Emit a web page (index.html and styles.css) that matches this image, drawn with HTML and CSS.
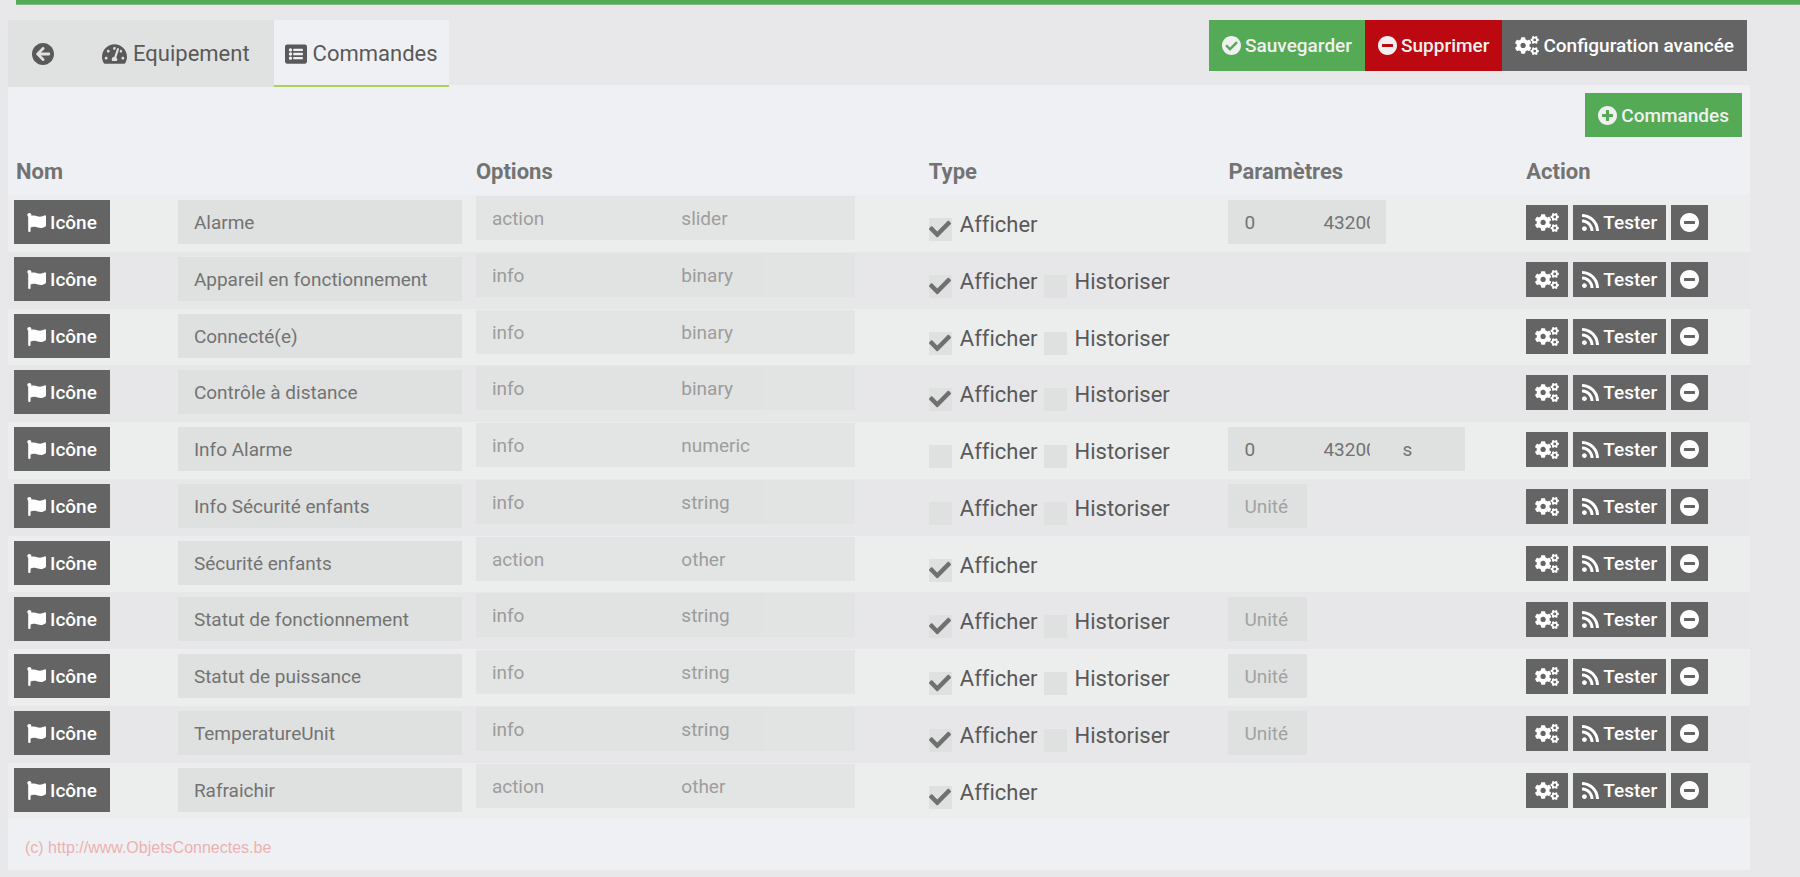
FILE: index.html
```html
<!DOCTYPE html>
<html lang="fr">
<head>
<meta charset="utf-8">
<title>Commandes</title>
<link rel="stylesheet" href="styles.css">
</head>
<body>
<svg class="sprite" aria-hidden="true">
  <symbol id="back" viewBox="8 8 496 496"><path d="M256 504C119 504 8 393 8 256S119 8 256 8s248 111 248 248-111 248-248 248zm28.9-143.6L209.4 288H392c13.3 0 24-10.7 24-24v-16c0-13.3-10.7-24-24-24H209.4l75.5-72.4c9.7-9.3 9.9-24.8.4-34.3l-11-10.9c-9.4-9.4-24.6-9.4-33.9 0L107.7 239c-9.4 9.4-9.4 24.6 0 33.9l132.7 132.7c9.4 9.4 24.6 9.4 33.9 0l11-10.9c9.5-9.5 9.3-25-.4-34.3z"/></symbol>
  <symbol id="gauge" viewBox="0 32 576 448"><path d="M288 32C128.94 32 0 160.94 0 320c0 52.8 14.25 102.26 39.06 144.8 5.61 9.62 16.3 15.2 27.44 15.2h443c11.14 0 21.83-5.58 27.44-15.2C561.75 422.26 576 372.8 576 320c0-159.06-128.94-288-288-288zm0 64c14.71 0 26.58 10.13 30.32 23.65-1.11 2.26-2.64 4.23-3.45 6.67l-9.22 27.67c-5.13 3.49-10.97 6.01-17.64 6.01-17.67 0-32-14.33-32-32S270.33 96 288 96zM96 384c-17.67 0-32-14.33-32-32s14.33-32 32-32 32 14.33 32 32-14.33 32-32 32zm48-160c-17.67 0-32-14.33-32-32s14.33-32 32-32 32 14.33 32 32-14.33 32-32 32zm246.77-72.41l-61.33 184C343.13 347.33 352 364.54 352 384c0 11.72-3.38 22.55-8.88 32H232.88c-5.5-9.45-8.88-20.28-8.88-32 0-33.94 26.5-61.43 59.9-63.59l61.34-184.01c4.17-12.56 17.73-19.45 30.36-15.17 12.57 4.19 19.35 17.79 15.17 30.36zm14.66 57.2l15.52-46.55c3.47-1.29 7.13-2.23 11.05-2.23 17.67 0 32 14.33 32 32s-14.33 32-32 32c-11.38-.01-20.89-6.28-26.57-15.22zM480 384c-17.67 0-32-14.33-32-32s14.33-32 32-32 32 14.33 32 32-14.33 32-32 32z"/></symbol>
  <symbol id="list" viewBox="0 32 512 448"><path fill-rule="evenodd" d="M464 480H48c-26.5 0-48-21.500-48-48V80c0-26.500 21.500-48 48-48h416c26.500 0 48 21.500 48 48v352c0 26.500-21.500 48-48 48zM128 120a40 40 0 1 0 0 80 40 40 0 0 0 0-80zm0 96a40 40 0 1 0 0 80 40 40 0 0 0 0-80zm0 96a40 40 0 1 0 0 80 40 40 0 0 0 0-80zM204 132h200a12 12 0 0 1 12 12v32a12 12 0 0 1-12 12H204a12 12 0 0 1-12-12v-32a12 12 0 0 1 12-12zm0 96h200a12 12 0 0 1 12 12v32a12 12 0 0 1-12 12H204a12 12 0 0 1-12-12v-32a12 12 0 0 1 12-12zm0 96h200a12 12 0 0 1 12 12v32a12 12 0 0 1-12 12H204a12 12 0 0 1-12-12v-32a12 12 0 0 1 12-12z"/></symbol>
  <symbol id="ok" viewBox="8 8 496 496"><path d="M504 256c0 136.967-111.033 248-248 248S8 392.967 8 256 119.033 8 256 8s248 111.033 248 248zM227.314 387.314l184-184c6.248-6.248 6.248-16.379 0-22.627l-22.627-22.627c-6.248-6.249-16.379-6.249-22.628 0L216 308.118l-70.059-70.059c-6.248-6.248-16.379-6.248-22.628 0l-22.627 22.627c-6.248 6.248-6.248 16.379 0 22.627l104 104c6.249 6.249 16.379 6.249 22.628.001z"/></symbol>
  <symbol id="minus" viewBox="8 8 496 496"><path d="M256 8C119 8 8 119 8 256s111 248 248 248 248-111 248-248S393 8 256 8zM124 296c-6.600 0-12-5.400-12-12v-56c0-6.600 5.400-12 12-12h264c6.600 0 12 5.400 12 12v56c0 6.600-5.400 12-12 12H124z"/></symbol>
  <symbol id="plus" viewBox="8 8 496 496"><path d="M256 8C119 8 8 119 8 256s111 248 248 248 248-111 248-248S393 8 256 8zm144 276c0 6.600-5.400 12-12 12h-92v92c0 6.600-5.400 12-12 12h-56c-6.600 0-12-5.400-12-12v-92h-92c-6.600 0-12-5.400-12-12v-56c0-6.600 5.400-12 12-12h92v-92c0-6.600 5.400-12 12-12h56c6.600 0 12 5.400 12 12v92h92c6.600 0 12 5.400 12 12v56z"/></symbol>
  <symbol id="flag" viewBox="0 0 512 512"><path d="M349.565 98.783C295.978 98.783 251.721 64 184.348 64c-24.955 0-47.309 4.384-68.045 12.013a55.947 55.947 0 0 0 3.586-23.562C118.117 24.015 94.806 1.206 66.338.048 34.345-1.254 8 24.296 8 56c0 19.026 9.497 35.825 24 45.945V488c0 13.255 10.745 24 24 24h16c13.255 0 24-10.745 24-24v-94.400c28.311-12.064 63.582-22.122 114.435-22.122 53.588 0 97.844 34.783 165.217 34.783 48.169 0 86.667-16.294 122.505-40.858C506.840 359.452 512 349.571 512 339.045v-243.100c0-23.393-24.269-38.870-45.485-29.016-34.338 15.948-76.454 31.854-116.950 31.854z"/></symbol>
  <symbol id="rss" viewBox="0 32 448 448"><path d="M128.081 415.959c0 35.369-28.672 64.041-64.041 64.041S0 451.328 0 415.959s28.672-64.041 64.041-64.041 64.040 28.673 64.040 64.041zm175.660 47.250c-8.354-154.600-132.185-278.587-286.950-286.950C7.656 175.765 0 183.105 0 192.253v48.069c0 8.415 6.490 15.472 14.887 16.018 111.832 7.284 201.473 96.702 208.772 208.772.547 8.397 7.604 14.887 16.018 14.887h48.069c9.149.001 16.489-7.655 15.995-16.790zm144.249.288C439.596 229.677 251.465 40.445 16.503 32.010 7.473 31.686 0 38.981 0 48.016v48.068c0 8.625 6.835 15.645 15.453 15.999 191.179 7.839 344.627 161.316 352.465 352.465.353 8.618 7.373 15.453 15.999 15.453h48.068c9.034-.001 16.329-7.474 16.005-16.504z"/></symbol>
  <symbol id="cogs" viewBox="0 0 640 512">
    <path id="small-cog" d="M512.100 191l-8.200 14.300c-3 5.300-9.400 7.500-15.100 5.400-11.800-4.400-22.600-10.700-32.100-18.600-4.600-3.800-5.800-10.500-2.800-15.700l8.200-14.300c-6.900-8-12.300-17.300-15.900-27.400h-16.500c-6 0-11.200-4.300-12.200-10.300-2-12-2.100-24.600 0-37.100 1-6 6.200-10.400 12.200-10.400h16.500c3.600-10.100 9-19.400 15.900-27.400l-8.200-14.300c-3-5.200-1.900-11.900 2.800-15.700 9.500-7.900 20.400-14.200 32.100-18.600 5.700-2.100 12.100.1 15.100 5.400l8.200 14.300c10.500-1.900 21.200-1.900 31.700 0L552 6.300c3-5.300 9.400-7.500 15.100-5.400 11.800 4.400 22.600 10.700 32.100 18.600 4.600 3.800 5.800 10.500 2.800 15.700l-8.200 14.300c6.900 8 12.300 17.300 15.900 27.400h16.500c6 0 11.200 4.300 12.200 10.300 2 12 2.100 24.600 0 37.100-1 6-6.200 10.400-12.200 10.400h-16.500c-3.600 10.100-9 19.400-15.900 27.400l8.200 14.300c3 5.200 1.900 11.900-2.800 15.700-9.500 7.900-20.400 14.200-32.100 18.600-5.700 2.100-12.100-.1-15.100-5.400l-8.200-14.300c-10.400 1.900-21.200 1.900-31.700 0zm-10.500-58.800c38.500 29.600 82.400-14.300 52.800-52.800-38.500-29.700-82.400 14.300-52.800 52.800z"/>
    <use href="#small-cog" y="301"/>
    <path d="M386.300 286.100l33.700 16.800c10.100 5.800 14.500 18.100 10.500 29.100-8.900 24.200-26.400 46.400-42.600 65.800-7.400 8.900-20.200 11.100-30.300 5.300l-29.100-16.800c-16 13.700-34.600 24.600-54.900 31.700v33.600c0 11.600-8.300 21.600-19.700 23.600-24.600 4.200-50.400 4.400-75.900 0-11.500-2-20-11.900-20-23.600V418c-20.300-7.200-38.900-18-54.900-31.700L74 403c-10 5.800-22.900 3.600-30.300-5.300-16.200-19.400-33.300-41.600-42.200-65.700-4-10.900.4-23.200 10.500-29.100l33.300-16.800c-3.900-20.900-3.900-42.400 0-63.400L12 205.800c-10.100-5.800-14.600-18.100-10.500-29 8.900-24.200 26-46.400 42.200-65.800 7.400-8.900 20.200-11.100 30.300-5.300l29.100 16.800c16-13.700 34.600-24.600 54.900-31.700V57.100c0-11.500 8.200-21.500 19.600-23.500 24.600-4.200 50.500-4.400 76-.1 11.500 2 20 11.900 20 23.600v33.600c20.300 7.200 38.900 18 54.900 31.700l29.100-16.800c10-5.800 22.900-3.600 30.300 5.300 16.200 19.400 33.200 41.600 42.100 65.800 4 10.900.1 23.200-10 29.100l-33.700 16.800c3.900 21 3.900 42.500 0 63.500zm-117.600 21.100c59.200-77-28.700-164.900-105.700-105.700-59.200 77 28.700 164.900 105.700 105.700z"/>
  </symbol>
</svg>

<div class="topbar"></div>

<main class="page">
  <header class="toolbar">
    <nav class="tabs">
      <a class="tab" href="#retour" aria-label="Retour"><svg class="icon tab-icon"><use href="#back"/></svg></a>
      <a class="tab" href="#equipement"><svg class="icon tab-icon-wide"><use href="#gauge"/></svg>Equipement</a>
      <a class="tab active" href="#commandes"><svg class="icon tab-icon"><use href="#list"/></svg>Commandes</a>
    </nav>
    <div class="toolbar-actions">
      <button class="btn large success" type="button"><svg class="icon"><use href="#ok"/></svg>Sauvegarder</button>
      <button class="btn large danger" type="button"><svg class="icon"><use href="#minus"/></svg>Supprimer</button>
      <button class="btn large" type="button"><svg class="icon cogs"><use href="#cogs"/></svg>Configuration avancée</button>
    </div>
  </header>

  <section class="panel" id="commandes">
    <div class="panel-actions">
      <button class="btn success" type="button"><svg class="icon"><use href="#plus"/></svg>Commandes</button>
    </div>

    <table class="commands">
      <colgroup><col class="col-name"><col class="col-options"><col class="col-type"><col class="col-params"><col></colgroup>
      <thead>
        <tr><th>Nom</th><th>Options</th><th>Type</th><th>Paramètres</th><th>Action</th></tr>
      </thead>
      <tbody>
        <tr>
          <td class="name"><div class="name-row"><button class="btn" type="button"><svg class="icon"><use href="#flag"/></svg>Icône</button><input class="field" aria-label="Nom" value="Alarme"></div></td>
          <td class="options"><div class="pair"><select class="field" aria-label="Type" disabled><option>action</option></select><select class="field" aria-label="Sous-type" disabled><option>slider</option></select></div></td>
          <td class="type"><div class="checks"><label class="check"><input type="checkbox" checked>Afficher</label></div></td>
          <td class="params"><div class="group"><input class="field" aria-label="Min" value="0"><input class="field" aria-label="Max" value="43200"></div></td>
          <td class="action"><div class="buttons"><button class="btn small" type="button" aria-label="Configurer"><svg class="icon cogs"><use href="#cogs"/></svg></button><button class="btn small" type="button"><svg class="icon rss"><use href="#rss"/></svg>Tester</button><button class="btn small" type="button" aria-label="Supprimer"><svg class="icon"><use href="#minus"/></svg></button></div></td>
        </tr>
        <tr>
          <td class="name"><div class="name-row"><button class="btn" type="button"><svg class="icon"><use href="#flag"/></svg>Icône</button><input class="field" aria-label="Nom" value="Appareil en fonctionnement"></div></td>
          <td class="options"><div class="pair"><select class="field" aria-label="Type" disabled><option>info</option></select><select class="field" aria-label="Sous-type" disabled><option>binary</option></select></div></td>
          <td class="type"><div class="checks"><label class="check"><input type="checkbox" checked>Afficher</label><label class="check"><input type="checkbox">Historiser</label></div></td>
          <td class="params"></td>
          <td class="action"><div class="buttons"><button class="btn small" type="button" aria-label="Configurer"><svg class="icon cogs"><use href="#cogs"/></svg></button><button class="btn small" type="button"><svg class="icon rss"><use href="#rss"/></svg>Tester</button><button class="btn small" type="button" aria-label="Supprimer"><svg class="icon"><use href="#minus"/></svg></button></div></td>
        </tr>
        <tr>
          <td class="name"><div class="name-row"><button class="btn" type="button"><svg class="icon"><use href="#flag"/></svg>Icône</button><input class="field" aria-label="Nom" value="Connecté(e)"></div></td>
          <td class="options"><div class="pair"><select class="field" aria-label="Type" disabled><option>info</option></select><select class="field" aria-label="Sous-type" disabled><option>binary</option></select></div></td>
          <td class="type"><div class="checks"><label class="check"><input type="checkbox" checked>Afficher</label><label class="check"><input type="checkbox">Historiser</label></div></td>
          <td class="params"></td>
          <td class="action"><div class="buttons"><button class="btn small" type="button" aria-label="Configurer"><svg class="icon cogs"><use href="#cogs"/></svg></button><button class="btn small" type="button"><svg class="icon rss"><use href="#rss"/></svg>Tester</button><button class="btn small" type="button" aria-label="Supprimer"><svg class="icon"><use href="#minus"/></svg></button></div></td>
        </tr>
        <tr>
          <td class="name"><div class="name-row"><button class="btn" type="button"><svg class="icon"><use href="#flag"/></svg>Icône</button><input class="field" aria-label="Nom" value="Contrôle à distance"></div></td>
          <td class="options"><div class="pair"><select class="field" aria-label="Type" disabled><option>info</option></select><select class="field" aria-label="Sous-type" disabled><option>binary</option></select></div></td>
          <td class="type"><div class="checks"><label class="check"><input type="checkbox" checked>Afficher</label><label class="check"><input type="checkbox">Historiser</label></div></td>
          <td class="params"></td>
          <td class="action"><div class="buttons"><button class="btn small" type="button" aria-label="Configurer"><svg class="icon cogs"><use href="#cogs"/></svg></button><button class="btn small" type="button"><svg class="icon rss"><use href="#rss"/></svg>Tester</button><button class="btn small" type="button" aria-label="Supprimer"><svg class="icon"><use href="#minus"/></svg></button></div></td>
        </tr>
        <tr>
          <td class="name"><div class="name-row"><button class="btn" type="button"><svg class="icon"><use href="#flag"/></svg>Icône</button><input class="field" aria-label="Nom" value="Info Alarme"></div></td>
          <td class="options"><div class="pair"><select class="field" aria-label="Type" disabled><option>info</option></select><select class="field" aria-label="Sous-type" disabled><option>numeric</option></select></div></td>
          <td class="type"><div class="checks"><label class="check"><input type="checkbox">Afficher</label><label class="check"><input type="checkbox">Historiser</label></div></td>
          <td class="params"><div class="group"><input class="field" aria-label="Min" value="0"><input class="field" aria-label="Max" value="43200"><input class="field" aria-label="Unité" value="s"></div></td>
          <td class="action"><div class="buttons"><button class="btn small" type="button" aria-label="Configurer"><svg class="icon cogs"><use href="#cogs"/></svg></button><button class="btn small" type="button"><svg class="icon rss"><use href="#rss"/></svg>Tester</button><button class="btn small" type="button" aria-label="Supprimer"><svg class="icon"><use href="#minus"/></svg></button></div></td>
        </tr>
        <tr>
          <td class="name"><div class="name-row"><button class="btn" type="button"><svg class="icon"><use href="#flag"/></svg>Icône</button><input class="field" aria-label="Nom" value="Info Sécurité enfants"></div></td>
          <td class="options"><div class="pair"><select class="field" aria-label="Type" disabled><option>info</option></select><select class="field" aria-label="Sous-type" disabled><option>string</option></select></div></td>
          <td class="type"><div class="checks"><label class="check"><input type="checkbox">Afficher</label><label class="check"><input type="checkbox">Historiser</label></div></td>
          <td class="params"><div class="group"><input class="field" aria-label="Unité" placeholder="Unité"></div></td>
          <td class="action"><div class="buttons"><button class="btn small" type="button" aria-label="Configurer"><svg class="icon cogs"><use href="#cogs"/></svg></button><button class="btn small" type="button"><svg class="icon rss"><use href="#rss"/></svg>Tester</button><button class="btn small" type="button" aria-label="Supprimer"><svg class="icon"><use href="#minus"/></svg></button></div></td>
        </tr>
        <tr>
          <td class="name"><div class="name-row"><button class="btn" type="button"><svg class="icon"><use href="#flag"/></svg>Icône</button><input class="field" aria-label="Nom" value="Sécurité enfants"></div></td>
          <td class="options"><div class="pair"><select class="field" aria-label="Type" disabled><option>action</option></select><select class="field" aria-label="Sous-type" disabled><option>other</option></select></div></td>
          <td class="type"><div class="checks"><label class="check"><input type="checkbox" checked>Afficher</label></div></td>
          <td class="params"></td>
          <td class="action"><div class="buttons"><button class="btn small" type="button" aria-label="Configurer"><svg class="icon cogs"><use href="#cogs"/></svg></button><button class="btn small" type="button"><svg class="icon rss"><use href="#rss"/></svg>Tester</button><button class="btn small" type="button" aria-label="Supprimer"><svg class="icon"><use href="#minus"/></svg></button></div></td>
        </tr>
        <tr>
          <td class="name"><div class="name-row"><button class="btn" type="button"><svg class="icon"><use href="#flag"/></svg>Icône</button><input class="field" aria-label="Nom" value="Statut de fonctionnement"></div></td>
          <td class="options"><div class="pair"><select class="field" aria-label="Type" disabled><option>info</option></select><select class="field" aria-label="Sous-type" disabled><option>string</option></select></div></td>
          <td class="type"><div class="checks"><label class="check"><input type="checkbox" checked>Afficher</label><label class="check"><input type="checkbox">Historiser</label></div></td>
          <td class="params"><div class="group"><input class="field" aria-label="Unité" placeholder="Unité"></div></td>
          <td class="action"><div class="buttons"><button class="btn small" type="button" aria-label="Configurer"><svg class="icon cogs"><use href="#cogs"/></svg></button><button class="btn small" type="button"><svg class="icon rss"><use href="#rss"/></svg>Tester</button><button class="btn small" type="button" aria-label="Supprimer"><svg class="icon"><use href="#minus"/></svg></button></div></td>
        </tr>
        <tr>
          <td class="name"><div class="name-row"><button class="btn" type="button"><svg class="icon"><use href="#flag"/></svg>Icône</button><input class="field" aria-label="Nom" value="Statut de puissance"></div></td>
          <td class="options"><div class="pair"><select class="field" aria-label="Type" disabled><option>info</option></select><select class="field" aria-label="Sous-type" disabled><option>string</option></select></div></td>
          <td class="type"><div class="checks"><label class="check"><input type="checkbox" checked>Afficher</label><label class="check"><input type="checkbox">Historiser</label></div></td>
          <td class="params"><div class="group"><input class="field" aria-label="Unité" placeholder="Unité"></div></td>
          <td class="action"><div class="buttons"><button class="btn small" type="button" aria-label="Configurer"><svg class="icon cogs"><use href="#cogs"/></svg></button><button class="btn small" type="button"><svg class="icon rss"><use href="#rss"/></svg>Tester</button><button class="btn small" type="button" aria-label="Supprimer"><svg class="icon"><use href="#minus"/></svg></button></div></td>
        </tr>
        <tr>
          <td class="name"><div class="name-row"><button class="btn" type="button"><svg class="icon"><use href="#flag"/></svg>Icône</button><input class="field" aria-label="Nom" value="TemperatureUnit"></div></td>
          <td class="options"><div class="pair"><select class="field" aria-label="Type" disabled><option>info</option></select><select class="field" aria-label="Sous-type" disabled><option>string</option></select></div></td>
          <td class="type"><div class="checks"><label class="check"><input type="checkbox" checked>Afficher</label><label class="check"><input type="checkbox">Historiser</label></div></td>
          <td class="params"><div class="group"><input class="field" aria-label="Unité" placeholder="Unité"></div></td>
          <td class="action"><div class="buttons"><button class="btn small" type="button" aria-label="Configurer"><svg class="icon cogs"><use href="#cogs"/></svg></button><button class="btn small" type="button"><svg class="icon rss"><use href="#rss"/></svg>Tester</button><button class="btn small" type="button" aria-label="Supprimer"><svg class="icon"><use href="#minus"/></svg></button></div></td>
        </tr>
        <tr>
          <td class="name"><div class="name-row"><button class="btn" type="button"><svg class="icon"><use href="#flag"/></svg>Icône</button><input class="field" aria-label="Nom" value="Rafraichir"></div></td>
          <td class="options"><div class="pair"><select class="field" aria-label="Type" disabled><option>action</option></select><select class="field" aria-label="Sous-type" disabled><option>other</option></select></div></td>
          <td class="type"><div class="checks"><label class="check"><input type="checkbox" checked>Afficher</label></div></td>
          <td class="params"></td>
          <td class="action"><div class="buttons"><button class="btn small" type="button" aria-label="Configurer"><svg class="icon cogs"><use href="#cogs"/></svg></button><button class="btn small" type="button"><svg class="icon rss"><use href="#rss"/></svg>Tester</button><button class="btn small" type="button" aria-label="Supprimer"><svg class="icon"><use href="#minus"/></svg></button></div></td>
        </tr>
      </tbody>
    </table>

    <footer class="credit">(c) http://www.ObjetsConnectes.be</footer>
  </section>
</main>
</body>
</html>
```
FILE: styles.css
```css
* { box-sizing: border-box; }

body {
  margin: 0;
  background: #e8e8ea;
  color: #595959;
  font-family: Roboto, "Liberation Sans", sans-serif;
  font-size: 22px;
  font-variant-ligatures: none;
}

.sprite { display: none; }

.icon {
  flex: none;
  width: 19px;
  height: 19px;
  fill: currentColor;
}
.icon.cogs { width: 24px; }
.icon.rss { width: 17px; height: 17px; }

.topbar {
  height: 5px;
  margin-left: 16px;
  background: #54aa55;
  border-bottom: 1px solid #7cbc7d;
}

.page { padding: 15px 50px 7px 8px; }

.toolbar {
  display: flex;
  justify-content: space-between;
  align-items: flex-start;
  margin-bottom: -2px;
}

.tabs {
  display: flex;
  background: #e0e2e1;
}
.tab {
  display: flex;
  align-items: center;
  gap: 6px;
  height: 67px;
  padding: 0 24px;
  color: inherit;
  text-decoration: none;
}
.tab.active {
  padding: 2px 11px 0;
  background: #eff0f3;
  border-bottom: 2px solid #a8d25a;
}
.icon.tab-icon { width: 22px; height: 22px; }
.icon.tab-icon-wide { width: 25px; height: 20px; }

.toolbar-actions {
  display: flex;
  padding-right: 3px;
}

.btn {
  display: flex;
  align-items: center;
  justify-content: center;
  gap: 4px;
  height: 44px;
  padding: 0 13px;
  border: 0;
  border-radius: 0;
  background: #646464;
  color: #fff;
  font: 500 19px Roboto, "Liberation Sans", sans-serif;
  white-space: nowrap;
}
.btn.large { height: 51px; }
.btn.small { height: 35px; padding: 0 9px; }
.btn.success { background: #54aa55; color: #f0f0f0; }
.btn.danger { background: #bc0810; color: #f0f0f0; }

.panel { background: #eff0f3; }

.panel-actions {
  display: flex;
  justify-content: flex-end;
  padding: 8px 8px 6px;
}

.commands {
  width: 100%;
  border-collapse: collapse;
  table-layout: fixed;
}
.col-name { width: 26.4%; }
.col-options { width: 26%; }
.col-type { width: 17.2%; }
.col-params { width: 17.1%; }

.commands th {
  height: 52px;
  padding: 4px 8px 0;
  color: #737373;
  font-weight: 700;
  text-align: left;
}
.commands td {
  height: 57px;
  padding: 0 8px;
  vertical-align: top;
}
.commands tr:nth-child(4n+3) td { height: 56px; }
.commands tbody tr:nth-child(odd) { background: #eceeed; }
.commands tbody tr:nth-child(even) { background: #e7e7e9; }

.commands td.name { padding: 5px 6px 0; }
.commands td.options { padding-top: 1px; }
.commands td.type { padding-top: 17px; }
.commands td.params { padding-top: 5px; }
.commands td.action { padding-top: 10px; }

.field {
  appearance: none;
  min-width: 0;
  height: 44px;
  padding: 0 16px;
  border: 0;
  border-radius: 0;
  background: #dfe1e0;
  color: #737373;
  font: 19px Roboto, "Liberation Sans", sans-serif;
}
.field::placeholder { color: #a2a2a2; opacity: 1; }
.field:disabled { opacity: 0.65; }

.name-row {
  display: flex;
  justify-content: space-between;
}
.name-row .field { width: 284px; }

.pair {
  display: grid;
  grid-template-columns: 1fr 1fr;
  padding-right: 58px;
}

.checks { display: flex; gap: 6px; }
.check {
  display: flex;
  align-items: flex-start;
  gap: 8px;
  line-height: 26px;
}
.check input {
  appearance: none;
  flex: none;
  width: 23px;
  height: 23px;
  margin: 6px 0 0;
  background: #dfe1e0;
}
.check input:checked {
  background: #dfe1e0 url("data:image/svg+xml,%3Csvg xmlns='http://www.w3.org/2000/svg' viewBox='0 0 512 512'%3E%3Cpath fill='%23707070' d='M173.900 439.400l-166.400-166.400c-10-10-10-26.200 0-36.200l36.200-36.200c10-10 26.200-10 36.200 0L192 312.700 432.100 72.600c10-10 26.200-10 36.200 0l36.200 36.200c10 10 10 26.200 0 36.200l-294.400 294.400c-10 10-26.200 10-36.200 0z'/%3E%3C/svg%3E") left top / 22px 22px no-repeat;
}

.group { display: flex; }
.group .field { width: 79px; }

.buttons { display: flex; gap: 5px; }

.credit {
  padding: 20px 17px 13px;
  color: #ecb0b2;
  font: 16px/18px "Liberation Sans", Arial, sans-serif;
}
```
